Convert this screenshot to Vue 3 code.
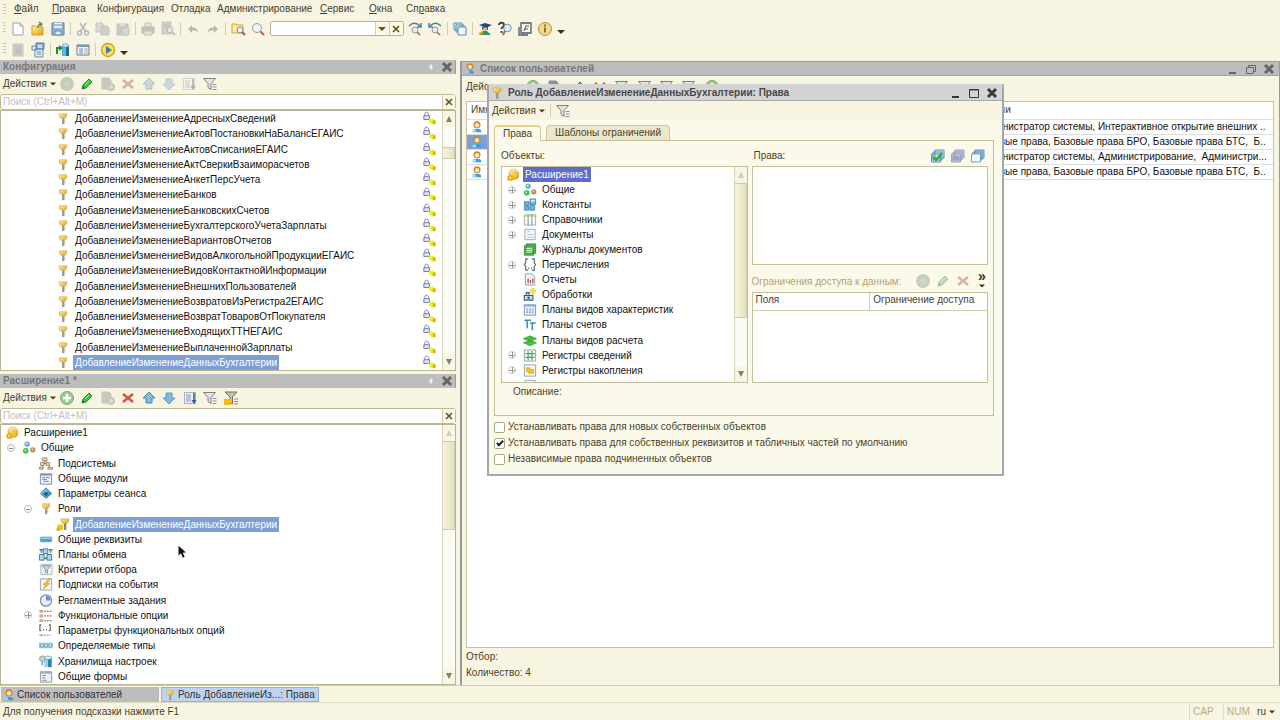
<script setup>
import { ref } from 'vue'

const menus = [
  ['', 'Ф', 'айл'], ['', 'П', 'равка'], ['Конфигурация', '', ''], ['Отладка', '', ''],
  ['Администрирование', '', ''], ['', 'С', 'ервис'], ['', 'О', 'кна'], ['Сп', 'р', 'авка'],
]

const mainTools = [
  { i: 'new', t: 'Новый' }, { i: 'open', t: 'Открыть' }, { i: 'save', t: 'Сохранить' }, { sep: true },
  { i: 'cut', t: 'Вырезать', off: true }, { i: 'copy', t: 'Копировать', off: true }, { i: 'paste', t: 'Вставить', off: true }, { sep: true },
  { i: 'print', t: 'Печать', off: true }, { i: 'preview', t: 'Просмотр', off: true }, { sep: true },
  { i: 'undo', t: 'Отменить', off: true }, { i: 'redo', t: 'Повторить', off: true }, { sep: true },
  { i: 'findall', t: 'Глобальный поиск' }, { i: 'find', t: 'Найти' },
]
const searchTools = [
  { i: 'findnext', t: 'Найти далее' }, { i: 'findprev', t: 'Найти назад' }, { sep: true },
  { i: 'windows', t: 'Окна' }, { sep: true },
  { i: 'syntax', t: 'Синтакс-помощник' }, { i: 'helpfind', t: 'Поиск в справке' }, { i: 'helpdoc', t: 'Содержание' }, { i: 'info', t: 'О программе' },
]
const configTools = [
  { i: 'doc', t: 'Конфигурация', off: true }, { i: 'config', t: 'Открыть конфигурацию' }, { sep: true },
  { i: 'dbupdate', t: 'Обновить базу' }, { i: 'form', t: 'Форма' }, { sep: true }, { i: 'play', t: 'Начать отладку' },
]

const actions = (on) => [
  { i: 'add', t: 'Добавить', off: !on }, { i: 'pencil', t: 'Изменить' }, { i: 'addcopy', t: 'Скопировать', off: true },
  { i: 'del', t: 'Удалить', off: !on }, { i: 'up', t: 'Вверх', off: !on }, { i: 'down', t: 'Вниз', off: !on },
  { i: 'sort', t: 'Упорядочить', off: !on }, { i: 'filter', t: 'Отбор' },
]
const confActions = actions(false)
const extActions = [...actions(true), { i: 'filterext', t: 'Отбор по расширению' }]

const roles = [
  'АдресныхСведений', 'АктовПостановкиНаБалансЕГАИС', 'АктовСписанияЕГАИС', 'АктСверкиВзаиморасчетов',
  'АнкетПерсУчета', 'Банков', 'БанковскихСчетов', 'БухгалтерскогоУчетаЗарплаты', 'ВариантовОтчетов',
  'ВидовАлкогольнойПродукцииЕГАИС', 'ВидовКонтактнойИнформации', 'ВнешнихПользователей',
  'ВозвратовИзРегистра2ЕГАИС', 'ВозвратТоваровОтПокупателя', 'ВходящихТТНЕГАИС', 'ВыплаченнойЗарплаты',
  'ДанныхБухгалтерии',
].map((n) => 'ДобавлениеИзменение' + n)

const extTree = [
  { l: 0, i: 'root', t: 'Расширение1' },
  { l: 1, i: 'common', t: 'Общие', e: 'minus' },
  { l: 2, i: 'subsys', t: 'Подсистемы' },
  { l: 2, i: 'module', t: 'Общие модули' },
  { l: 2, i: 'session', t: 'Параметры сеанса' },
  { l: 2, i: 'key', t: 'Роли', e: 'minus' },
  { l: 3, i: 'keyext', t: 'ДобавлениеИзменениеДанныхБухгалтерии', sel: true },
  { l: 2, i: 'attr', t: 'Общие реквизиты' },
  { l: 2, i: 'exchange', t: 'Планы обмена' },
  { l: 2, i: 'criteria', t: 'Критерии отбора' },
  { l: 2, i: 'event', t: 'Подписки на события' },
  { l: 2, i: 'clock', t: 'Регламентные задания' },
  { l: 2, i: 'options', t: 'Функциональные опции', e: 'plus' },
  { l: 2, i: 'optparam', t: 'Параметры функциональных опций' },
  { l: 2, i: 'types', t: 'Определяемые типы' },
  { l: 2, i: 'storage', t: 'Хранилища настроек' },
  { l: 2, i: 'commonform', t: 'Общие формы' },
]

const objectTree = [
  { l: 0, i: 'root', t: 'Расширение1', sel: true },
  { l: 1, i: 'common', t: 'Общие', e: 'plus' },
  { l: 1, i: 'const', t: 'Константы', e: 'plus' },
  { l: 1, i: 'catalog', t: 'Справочники', e: 'plus' },
  { l: 1, i: 'document', t: 'Документы', e: 'plus' },
  { l: 1, i: 'journal', t: 'Журналы документов' },
  { l: 1, i: 'enum', t: 'Перечисления', e: 'plus' },
  { l: 1, i: 'report', t: 'Отчеты' },
  { l: 1, i: 'process', t: 'Обработки' },
  { l: 1, i: 'chartypes', t: 'Планы видов характеристик' },
  { l: 1, i: 'accounts', t: 'Планы счетов' },
  { l: 1, i: 'calc', t: 'Планы видов расчета' },
  { l: 1, i: 'inforeg', t: 'Регистры сведений', e: 'plus' },
  { l: 1, i: 'accumreg', t: 'Регистры накопления', e: 'plus' },
  { l: 1, i: 'document', t: '' },
]

const users = [
  'Администратор системы, Интерактивное открытие внешних ..',
  'Базовые права, Базовые права БРО, Базовые права БТС,  Б..',
  'Администратор системы, Администрирование,  Администри...',
  'Базовые права, Базовые права БРО, Базовые права БТС,  Б..',
]
const userActions = ['add', 'addcopy', 'pencil', 'del', 'filter', 'filter', 'filter', 'filter', 'add']

const options = ref([
  { t: 'Устанавливать права для новых собственных объектов', v: false },
  { t: 'Устанавливать права для собственных реквизитов и табличных частей по умолчанию', v: true },
  { t: 'Независимые права подчиненных объектов', v: false },
])
const query = ref('')
const confQuery = ref('')
const extQuery = ref('')
const indent = (l) => ({ paddingLeft: (l ? 3 + 17 * (l - 1) : 3) + 'px' })
</script>

<template>
  <div class="app">
    <svg class="defs" aria-hidden="true">
      <defs>
        <linearGradient id="gGold" x2="1" y2="1"><stop stop-color="#fff2a0" /><stop offset="1" stop-color="#e0a010" /></linearGradient>
        <linearGradient id="gBlue" x2="1" y2="1"><stop stop-color="#a8e0f4" /><stop offset="1" stop-color="#2878b0" /></linearGradient>
      </defs>
      <symbol id="new" viewBox="0 0 16 16"><path d="M3 2h7l3 3v9H3z" fill="#fff" stroke="#8ba4c4" /><path d="M10 2v3h3" fill="#dce8f4" stroke="#8ba4c4" /></symbol>
      <symbol id="open" viewBox="0 0 16 16"><path d="M2 5h4l1 1h6v8H2z" fill="url(#gGold)" stroke="#cfa030" /><path d="M8 7c0-3 1-4 3-4M9 1l3 2-2 2" fill="none" stroke="#5a8a40" stroke-width="1.3" /></symbol>
      <symbol id="save" viewBox="0 0 16 16"><path d="M2 2h12v12H2z" fill="#8fb4d4" stroke="#5d7f9f" /><path d="M4 2h8v5H4z" fill="#e8f0f8" /><path d="M4 4h8M5 10h6v4H5z" fill="#dfe9f0" stroke="#6a8cab" /></symbol>
      <symbol id="cut" viewBox="0 0 16 16"><path d="M5 2l6 9M11 2l-6 9" stroke="#5f74a4" stroke-width="1.6" /><circle cx="4.500" cy="12" r="2" fill="none" stroke="#5f74a4" stroke-width="1.4" /><circle cx="11.500" cy="12" r="2" fill="none" stroke="#5f74a4" stroke-width="1.400" /></symbol>
      <symbol id="copy" viewBox="0 0 16 16"><path d="M1 2h6l2 2v7H1z" fill="#b0bcd2" stroke="#7d8fb0" /><path d="M6 5h6l2 2v7H6z" fill="#94a3c0" stroke="#7d8fb0" /></symbol>
      <symbol id="paste" viewBox="0 0 16 16"><path d="M2 3h11v11H2z" fill="#8c99b2" stroke="#7c8aa6" /><path d="M5 2h5v3H5z" fill="#c0c8d6" /><path d="M7 7h7v7H7z" fill="#aab5c8" stroke="#7c8aa6" /></symbol>
      <symbol id="print" viewBox="0 0 16 16"><path d="M5 2h6v5H5z" fill="#ccc" stroke="#888" /><path d="M2 6h12v6H2z" fill="#88888f" stroke="#77777f" /><path d="M4 10h8v4H4z" fill="#ccc" stroke="#888" /></symbol>
      <symbol id="preview" viewBox="0 0 16 16"><path d="M2 1h9v12H2z" fill="#9ea4b4" stroke="#858da0" /><path d="M4 4h5M4 6h5" stroke="#70788c" /><circle cx="10" cy="9" r="3" fill="#ccd" stroke="#70788c" /><path d="M12 11l3 3" stroke="#70788c" stroke-width="2" /></symbol>
      <symbol id="undo" viewBox="0 0 16 16"><path d="M3 8l4-4v2.500c4 0 6 2 6 5-2-2-3-2-6-2V12z" fill="#4f7a60" /></symbol>
      <symbol id="redo" viewBox="0 0 16 16"><path d="M13 8L9 4v2.500c-4 0-6 2-6 5 2-2 3-2 6-2V12z" fill="#4f7a60" /></symbol>
      <symbol id="findall" viewBox="0 0 16 16"><path d="M2 3h4l1 1h6v8H2z" fill="#fce99a" stroke="#cda640" /><circle cx="10" cy="9" r="3" fill="#f3f0f0" stroke="#888" /><path d="M12 11l3 3" stroke="#a05c54" stroke-width="2" /></symbol>
      <symbol id="find" viewBox="0 0 16 16"><circle cx="7" cy="7" r="4.500" fill="#edf2f7" stroke="#909aa8" /><path d="M10.500 10.500l3.500 3.500" stroke="#a0685c" stroke-width="2" /></symbol>
      <symbol id="findnext" viewBox="0 0 16 16"><path d="M2 5c4-4 8-3 11 0M14 2v4h-4" fill="none" stroke="#4c7ca0" stroke-width="1.500" /><circle cx="8" cy="9" r="3" fill="#f0e8e8" stroke="#999" /><path d="M10 11l3 3" stroke="#a0685c" stroke-width="1.600" /></symbol>
      <symbol id="findprev" viewBox="0 0 16 16"><path d="M14 5c-4-4-8-3-11 0M2 2v4h4" fill="none" stroke="#4c7ca0" stroke-width="1.500" /><circle cx="8" cy="9" r="3" fill="#f0e8e8" stroke="#999" /><path d="M10 11l3 3" stroke="#a0685c" stroke-width="1.600" /></symbol>
      <symbol id="windows" viewBox="0 0 16 16"><path d="M2 2h8v7H2zM4 4h8v7H4z" fill="#d8e8f2" stroke="#5c8cae" /><path d="M6 6h8v8H6z" fill="#eef6fb" stroke="#5c8cae" /></symbol>
      <symbol id="syntax" viewBox="0 0 16 16"><path d="M2 4l6-2 7 2-6 3z" fill="#264c7c" /><path d="M5 6h6v3H5z" fill="#3a6696" /><circle cx="8" cy="8.500" r="2" fill="#e8bb86" /><path d="M3 14l3-4h4l4 4z" fill="#3f8c68" /><path d="M2 13l4-2" stroke="#d6a03a" stroke-width="2" /></symbol>
      <symbol id="helpfind" viewBox="0 0 16 16"><path d="M2 4c0-3 5-3 5 0 0 2-2.500 2-2.500 4M4.500 10v2" fill="none" stroke="#33404c" stroke-width="1.800" /><circle cx="10.500" cy="7" r="3.800" fill="#dfe9f5" stroke="#7d8fa8" /><path d="M8 10l-2 4" stroke="#a0685c" stroke-width="2" /></symbol>
      <symbol id="helpdoc" viewBox="0 0 16 16"><path d="M4 2h10v10H4z" fill="#fbf8ea" stroke="#4d5a68" stroke-width="1.300" /><path d="M2 6v8h9" fill="none" stroke="#4d5a68" stroke-width="1.300" /><path d="M7 10l2-5h3M7 8h4" fill="none" stroke="#4d5a68" /></symbol>
      <symbol id="info" viewBox="0 0 16 16"><circle cx="8" cy="8" r="6.500" fill="#f4d88a" stroke="#b98f48" /><path d="M8 3.500v2M8 6.500v5" stroke="#695a3a" stroke-width="1.600" /></symbol>
      <symbol id="doc" viewBox="0 0 16 16"><path d="M3 2h10v12H3z" fill="#9a9fac" stroke="#8a8f9c" /><path d="M5 5h6M5 7h6M5 9h6M5 11h6" stroke="#636a7a" /></symbol>
      <symbol id="config" viewBox="0 0 16 16"><path d="M2 4h5v4H2zM5 7h8v8H5z" fill="#dbe9f5" stroke="#6a8dac" /><path d="M6 1h8v6H6z" fill="#8cb2d6" stroke="#51789f" /><path d="M8 3l4 3M12 3L8 6" stroke="#fff" /><path d="M7 10h4M7 12h4" stroke="#6a8dac" /></symbol>
      <symbol id="dbupdate" viewBox="0 0 16 16"><path d="M7 3v11h7V3z" fill="#58b8e0" /><path d="M11 3v11h3V3z" fill="#256a9c" /><ellipse cx="10.500" cy="3.500" rx="3.500" ry="1.600" fill="#c6ecf8" stroke="#3a86ae" stroke-width=".6" /><path d="M2 12V6h3" fill="none" stroke="#268a3c" stroke-width="2" /><path d="M4 3l4 3-4 3z" fill="#268a3c" /></symbol>
      <symbol id="form" viewBox="0 0 16 16"><path d="M2 3h12v10H2z" fill="#f4f7fa" stroke="#66788c" /><path d="M2 3h12v2H2z" fill="#7d98b6" /><path d="M4 7h4M4 9h4M4 11h4" stroke="#6f88a4" /><path d="M9 6h4v6H9z" fill="#c8d4e0" /></symbol>
      <symbol id="play" viewBox="0 0 16 16"><circle cx="8" cy="8" r="6.500" fill="#ffe04c" stroke="#d19c1c" stroke-width="1.300" /><path d="M6 4l6 4-6 4z" fill="#3a80b0" /></symbol>

      <symbol id="add" viewBox="0 0 16 16"><circle cx="8" cy="8" r="6.500" fill="#9ccc94" stroke="#76ad75" /><path d="M8 4v8M4 8h8" stroke="#fff" stroke-width="2.400" /></symbol>
      <symbol id="addoff" viewBox="0 0 16 16"><circle cx="8" cy="8" r="7" fill="#7ca07c" /><path d="M8 5v6M5 8h6" stroke="#94b494" stroke-width="2" /></symbol>
      <symbol id="pencil" viewBox="0 0 16 16"><path d="M3 13l1-4 6-6 3 3-6 6z" fill="#38c638" stroke="#249028" /><path d="M3 13l1-3 2 2z" fill="#456" /><path d="M6 9l4-4" stroke="#a7f39a" /></symbol>
      <symbol id="addcopy" viewBox="0 0 16 16"><path d="M2 2h7l2 2v9H2z" fill="#8c94a6" stroke="#848c9e" /><circle cx="11" cy="11" r="4" fill="#7ba07a" /><path d="M11 9v4M9 11h4" stroke="#b4ccb2" stroke-width="1.500" /></symbol>
      <symbol id="del" viewBox="0 0 16 16"><path d="M3 4l10 8M13 4L3 12" stroke="#d65444" stroke-width="2.600" /></symbol>
      <symbol id="up" viewBox="0 0 16 16"><path d="M8 2l6 6h-3v5H5V8H2z" fill="#7cbbe0" stroke="#4a86b0" /></symbol>
      <symbol id="down" viewBox="0 0 16 16"><path d="M8 14l6-6h-3V3H5v5H2z" fill="#7cbbe0" stroke="#5f9cc6" /></symbol>
      <symbol id="sort" viewBox="0 0 16 16"><path d="M2.500 2.500h11v11h-11z" fill="#eef2f8" stroke="#a4b0c6" /><path d="M4 5h5M4 7h5M4 9h5M4 11h5" stroke="#8896ae" /><path d="M12 3v8" stroke="#3a5884" stroke-width="1.500" /><path d="M9.500 10h5L12 14z" fill="#3a5884" /></symbol>
      <symbol id="filter" viewBox="0 0 16 16"><path d="M1.500 2.500h12L9 7.500v6l-3-2v-4z" fill="#e2e2de" stroke="#84847c" /><path d="M10.500 8.500h4M10.500 11h4M10.500 13.500h4" stroke="#8a94b0" stroke-width="1.200" /></symbol>
      <symbol id="filterext" viewBox="0 0 16 16"><path d="M2 2h12L9.500 7v7L7 12V7z" fill="#c8c4b0" stroke="#766e50" /><path d="M1 9h7v6H1z" fill="#f0bc18" /><path d="M11 9h4M11 11.500h4M11 14h4" stroke="#8a8a7a" /></symbol>

      <symbol id="key" viewBox="0 0 16 16"><path d="M4 3h8v2.500L10 8H6L4 5.500z" fill="url(#gGold)" stroke="#c9ab58" stroke-width=".7" /><path d="M7 8h2.500v6H7z" fill="#9b9b95" /><path d="M9 10h1.500v2H9z" fill="#c8c4b4" /></symbol>
      <symbol id="keyext" viewBox="0 0 16 16"><path d="M6 2h8v2.500L12 7H8L6 4.500z" fill="url(#gGold)" stroke="#b89844" stroke-width=".7" /><path d="M9 7h2.500v7H9z" fill="#8e867a" /><path d="M2 8h6v6H2z" fill="#f3c81a" /><circle cx="3" cy="13" r="2" fill="#e8b40c" /></symbol>
      <symbol id="lock" viewBox="0 0 16 16"><path d="M3.500 5V3.500c0-3 4-3 4 0V5" fill="none" stroke="#6a7aa0" /><path d="M2.500 5h6v4h-6z" fill="#e3e6f2" stroke="#6a7aa0" /><path d="M8 8h4l3 2v4h-4l-3-2z" fill="#f5ed1c" /><path d="M12 10h3v4h-3z" fill="#cdb91a" /></symbol>
      <symbol id="root" viewBox="0 0 16 16"><path d="M4 6c0-5 10-5 10 1v4c-2 3-9 3-10 0z" fill="url(#gGold)" stroke="#d29c14" stroke-width=".8" /><path d="M2 10l3-2 3 2v4l-3 1-3-1z" fill="#e9ac14" /><circle cx="5" cy="11.500" r="1" fill="#fff3b0" /><path d="M5 5c2-3 6-2 8 0" stroke="#fffad0" fill="none" /></symbol>
      <symbol id="common" viewBox="0 0 16 16"><circle cx="6" cy="4.500" r="2.800" fill="#6aa9d8" /><circle cx="4.500" cy="11.500" r="3" fill="#3fc24c" /><circle cx="12" cy="10.500" r="2.800" fill="#bd8468" /><circle cx="5.500" cy="4" r="1" fill="#d4ecfa" /><circle cx="4" cy="11" r="1" fill="#c6f6c8" /><circle cx="11.700" cy="10" r="1" fill="#f2d9cc" /></symbol>
      <symbol id="subsys" viewBox="0 0 16 16"><path d="M7 4L4 12M7 4l5 8M4 8h4" stroke="#8c7058" fill="none" /><path d="M4 2h5v3H4zM2 7h4v3H2zM8 7h4v3H8zM1 12h4v2H1zM10 12h5v2h-5z" fill="#f0dcc0" stroke="#8c7058" stroke-width=".8" /></symbol>
      <symbol id="module" viewBox="0 0 16 16"><path d="M2 3h12v11H2z" fill="#eef4fa" stroke="#6c8cac" /><path d="M2 3h12v2H2z" fill="#7fa2c6" /><path d="M4 7h3M8 7h4M4 9h5M5 11h6" stroke="#a0707c" /></symbol>
      <symbol id="session" viewBox="0 0 16 16"><path d="M8 2l6 6-6 5-6-5z" fill="url(#gBlue)" stroke="#3a7ca0" /><path d="M8 6l3 2-3 3-3-3z" fill="#1c5c88" /></symbol>
      <symbol id="attr" viewBox="0 0 16 16"><path d="M2 5.500h12v5H2z" fill="#459ccc" stroke="#6eb4d8" /><path d="M3 7h10" stroke="#a9def2" /></symbol>
      <symbol id="exchange" viewBox="0 0 16 16"><path d="M1 3h4M11 3h4M3 3v3M13 3v3" stroke="#4c9458" stroke-width="1.500" /><path d="M5 2h5v5H5zM1 8h5v6H1zM9 8h5v6H9z" fill="#a9dcf0" stroke="#39789c" /><path d="M6 12h3" stroke="#4c9458" stroke-width="2" /></symbol>
      <symbol id="criteria" viewBox="0 0 16 16"><path d="M2.500 2.500h12v11h-12z" fill="#eef0f2" stroke="#b0b6be" /><path d="M4 4h9L9.500 8v4l-2-1V8z" fill="#d4d7dc" stroke="#8c929c" /></symbol>
      <symbol id="event" viewBox="0 0 16 16"><path d="M2 2h12v12H2z" fill="#f2f4f6" stroke="#98a0a8" /><path d="M11 2l-6 6h3l-3 5 7-6H9l4-5z" fill="#f8c83c" stroke="#c9922a" stroke-width=".7" /></symbol>
      <symbol id="clock" viewBox="0 0 16 16"><circle cx="8" cy="8" r="6" fill="#e8eefa" stroke="#8090b8" stroke-width="1.400" /><path d="M8 8V3a5 5 0 0 1 5 5z" fill="#6690d4" /></symbol>
      <symbol id="options" viewBox="0 0 16 16"><path d="M1 2h4v3H1zM1 7h4v3H1zM1 12h4v3H1z" fill="#caa88a" /><path d="M6 3.500h9M6 8.500h9M6 13.500h9" stroke="#8a8078" stroke-dasharray="2 1" stroke-width="1.300" /></symbol>
      <symbol id="optparam" viewBox="0 0 16 16"><path d="M3 2H1.500v6H3M11 2h1.500v6H11M5 7h1M8 7h1" fill="none" stroke="#645c5c" stroke-width="1.200" /><path d="M1 12h4v2H1z" fill="#caa88a" /><path d="M6 13h7" stroke="#8a8078" stroke-dasharray="2 1" /></symbol>
      <symbol id="types" viewBox="0 0 16 16"><path d="M.5 5h15v6H.5z" fill="#9fd3e2" /><path d="M2 6.500h3v3H2zM6.500 6.500h3v3h-3zM11 6.500h3v3h-3z" fill="#e4f5f8" stroke="#5898ac" stroke-width=".8" /></symbol>
      <symbol id="storage" viewBox="0 0 16 16"><path d="M6 4v10h8V4z" fill="#9cd8f0" /><path d="M10 4v10h4V4z" fill="#2f80ac" /><ellipse cx="10" cy="4" rx="4" ry="1.800" fill="#d8f2fa" stroke="#5498b8" stroke-width=".7" /><circle cx="4" cy="5" r="3" fill="#c6ced2" stroke="#8f9ca4" /><path d="M4 8v4" stroke="#8f9ca4" stroke-width="1.600" /></symbol>
      <symbol id="commonform" viewBox="0 0 16 16"><path d="M2 3h12v11H2z" fill="#f0f3f5" stroke="#8494a4" /><path d="M2 3h12v2H2z" fill="#9db0c2" /><path d="M4 7h4M4 9.500h3M4 12h5" stroke="#7a8a9a" /></symbol>
      <symbol id="const" viewBox="0 0 16 16"><path d="M2 5h5v4H2zM2 10h5v4H2zM8 9h5v5H8zM8 2h6v6H8z" fill="#6db3dc" stroke="#3c7ca6" stroke-width=".8" /><path d="M9 3h4v2H9z" fill="#d2eefa" /></symbol>
      <symbol id="catalog" viewBox="0 0 16 16"><path d="M2 3h12v11H2z" fill="#fbfdf2" stroke="#a0aa8a" /><path d="M2 3h12v2H2z" fill="#b4d8a0" /><path d="M6 3v11M10 3v11" stroke="#8a9cb8" stroke-width="1.200" /></symbol>
      <symbol id="document" viewBox="0 0 16 16"><path d="M2.500 2.500h11v11h-11z" fill="#f4f8fd" stroke="#93aac6" /><path d="M5 5h3M5 8h7M5 11h7" stroke="#afc0d6" /></symbol>
      <symbol id="journal" viewBox="0 0 16 16"><path d="M4 2h10v10H4zM2 4h10v10H2z" fill="#5cc45c" stroke="#318c3a" /><path d="M4 7h6M4 9h6M4 11h6" stroke="#dbf6d4" /></symbol>
      <symbol id="enum" viewBox="0 0 16 16"><path d="M6 2H3.500v4L2 8l1.500 2v4H6M10 2h2.500v4L14 8l-1.500 2v4H10" fill="none" stroke="#5a6470" stroke-width="1.200" /><path d="M6 12h1M9 12h1" stroke="#5a6470" stroke-width="1.500" /></symbol>
      <symbol id="report" viewBox="0 0 16 16"><path d="M3 2h7l3 3v9H3z" fill="#f5f5f5" stroke="#99a" /><path d="M6 12V7M8.500 12V8.500M11 12V7" stroke="#a8585c" stroke-width="1.400" /></symbol>
      <symbol id="process" viewBox="0 0 16 16"><path d="M2 9h9v5H2zM4 9V6h3v3" fill="#d4e4f2" stroke="#3c5c7c" stroke-width="1.200" /><circle cx="6.500" cy="11.500" r="1.400" fill="#3c5c7c" /><path d="M11 1l3.500 3.500L11 8 7.500 4.500z" fill="#f7ea2c" stroke="#cdb82a" stroke-width=".6" /></symbol>
      <symbol id="chartypes" viewBox="0 0 16 16"><path d="M2 3h12v11H2z" fill="#f0f6fc" stroke="#7490b0" /><path d="M2 3h12v2H2z" fill="#8cb0d4" /><path d="M5 7v5M8 7v5M11 7v5" stroke="#7490b0" stroke-dasharray="1 1" stroke-width="2" /></symbol>
      <symbol id="accounts" viewBox="0 0 16 16"><path d="M2 3.500h7M5 3.500V12M8 6.500h6M10.500 6.500V14" fill="none" stroke="#4288aa" stroke-width="1.600" /></symbol>
      <symbol id="calc" viewBox="0 0 16 16"><path d="M1 10.500l7-3 7 3-7 3zM1 6l7-3 7 3-7 3z" fill="#48c23c" stroke="#2c9430" stroke-width=".7" /></symbol>
      <symbol id="inforeg" viewBox="0 0 16 16"><path d="M2 2h12v12H2z" fill="#f2faf4" stroke="#8aa896" /><path d="M6 3v10M10 3v10M3 6h10M3 10h10" stroke="#4ea468" stroke-width="1.200" /></symbol>
      <symbol id="accumreg" viewBox="0 0 16 16"><path d="M2 2h12v12H2z" fill="#fdfbea" stroke="#8aa0b8" /><path d="M4 5h4v2h4v4H6V9H4z" fill="#ecc622" stroke="#c9a018" stroke-width=".6" /></symbol>
      <symbol id="user" viewBox="0 0 16 16"><circle cx="8" cy="5.500" r="4" fill="#c8862c" /><circle cx="8" cy="6" r="2.500" fill="#fbe1b4" /><path d="M3 14c0-3 2-4 5-4s5 1 5 4z" fill="#3d9cd4" /><path d="M3 11h4v3H3z" fill="#9cd8f4" /></symbol>
      <symbol id="checkall" viewBox="0 0 16 16"><path d="M5 2h9v8H5zM3 4h9v8H3zM1.500 6h9v8h-9z" fill="#cfe4f2" stroke="#5c90b8" /><path d="M3 9l3 3 6-7" fill="none" stroke="#2ab42a" stroke-width="2.400" /></symbol>
      <symbol id="checkgray" viewBox="0 0 16 16"><path d="M5 2h9v8H5zM3 4h9v8H3zM1.500 6h9v8h-9z" fill="#bcc2d6" stroke="#9ba3bf" /><path d="M3 9h6M3 11h6" stroke="#8c95b4" /></symbol>
      <symbol id="checknone" viewBox="0 0 16 16"><path d="M5 2h9v8H5zM3 4h9v8H3z" fill="#a9c6de" stroke="#5c90b8" /><path d="M1.500 6h9v8h-9z" fill="#eefaff" stroke="#6fa4c6" /></symbol>
      <symbol id="plus" viewBox="0 0 16 16"><circle cx="8" cy="8" r="3.500" fill="#fff" stroke="#c4c4c4" /><path d="M5 8.500h6M8.500 5v6" stroke="#999" /></symbol>
      <symbol id="minus" viewBox="0 0 16 16"><circle cx="8" cy="8" r="3.500" fill="#fff" stroke="#b8b8b8" /><path d="M6 8.500h4" stroke="#888" /></symbol>
      <symbol id="close" viewBox="0 0 16 16"><path d="M4 4l8 8M12 4l-8 8" stroke="currentColor" stroke-width="3" /></symbol>
      <symbol id="clear" viewBox="0 0 16 16"><path d="M5 5l6 6M11 5l-6 6" stroke="currentColor" stroke-width="1.600" /></symbol>
      <symbol id="pin" viewBox="0 0 16 16"><path d="M7 6h2v4H7z" fill="#f2f2f2" stroke="#e8e8e8" /></symbol>
      <symbol id="min" viewBox="0 0 16 16"><path d="M4 12h7" stroke="currentColor" stroke-width="2" /></symbol>
      <symbol id="max" viewBox="0 0 16 16"><path d="M3.500 4.500h9v8h-9zM3 5h10" fill="none" stroke="currentColor" /></symbol>
      <symbol id="restore" viewBox="0 0 16 16"><path d="M5.500 6V4.500h7v6H11M3.500 6.500h7v6h-7z" fill="none" stroke="currentColor" /></symbol>
      <symbol id="caret" viewBox="0 0 16 16"><path d="M4 6h8l-4 4z" fill="currentColor" /></symbol>
      <symbol id="triup" viewBox="0 0 16 16"><path d="M5 11h6L8 5z" fill="currentColor" /></symbol>
      <symbol id="tridown" viewBox="0 0 16 16"><path d="M5 5h6L8 11z" fill="currentColor" /></symbol>
    </svg>

    <nav class="menubar grip">
      <button v-for="(m, k) in menus" :key="k" type="button">{{ m[0] }}<u v-if="m[1]">{{ m[1] }}</u>{{ m[2] }}</button>
    </nav>

    <div class="toolbar grip">
      <template v-for="(b, k) in mainTools" :key="k">
        <span v-if="b.sep" class="sep"></span>
        <button v-else type="button" class="tool" :aria-label="b.t" :disabled="b.off"><svg><use :href="'#' + b.i" /></svg></button>
      </template>
      <div class="combo">
        <input v-model="query" type="text" aria-label="Строка поиска" />
        <button type="button" aria-label="История поиска"><svg><use href="#caret" /></svg></button>
        <button type="button" aria-label="Очистить"><svg><use href="#clear" /></svg></button>
      </div>
      <template v-for="(b, k) in searchTools" :key="'s' + k">
        <span v-if="b.sep" class="sep"></span>
        <button v-else type="button" class="tool" :aria-label="b.t"><svg><use :href="'#' + b.i" /></svg></button>
      </template>
      <button type="button" class="more" aria-label="Ещё"><svg><use href="#caret" /></svg></button>
    </div>

    <div class="toolbar grip">
      <template v-for="(b, k) in configTools" :key="k">
        <span v-if="b.sep" class="sep"></span>
        <button v-else type="button" class="tool" :aria-label="b.t" :disabled="b.off"><svg><use :href="'#' + b.i" /></svg></button>
      </template>
      <button type="button" class="more" aria-label="Ещё"><svg><use href="#caret" /></svg></button>
    </div>

    <main class="workspace">
      <div class="side">
        <section class="panel">
          <header class="caption">
            <h2>Конфигурация</h2>
            <button type="button" aria-label="Закрепить"><svg><use href="#pin" /></svg></button>
            <button type="button" aria-label="Закрыть"><svg><use href="#close" /></svg></button>
          </header>
          <div class="actions">
            <button type="button" class="drop">Действия<svg><use href="#caret" /></svg></button>
            <div class="icons eight">
              <button v-for="a in confActions" :key="a.i" type="button" class="tool" :aria-label="a.t" :disabled="a.off"><svg><use :href="a.i === 'add' ? '#addoff' : '#' + a.i" /></svg></button>
            </div>
          </div>
          <div class="search">
            <input v-model="confQuery" type="text" placeholder="Поиск (Ctrl+Alt+M)" aria-label="Поиск в конфигурации" />
            <button type="button" aria-label="Очистить"><svg><use href="#clear" /></svg></button>
          </div>
          <div class="listbox">
            <ul class="tree">
              <li v-for="(r, k) in roles" :key="r" :style="indent(3)">
                <span class="exp"></span>
                <svg><use href="#key" /></svg>
                <span class="label" :class="{ sel: k === 16 }">{{ r }}</span>
                <svg class="lock"><use href="#lock" /></svg>
              </li>
            </ul>
            <div class="scroll">
              <button type="button" aria-label="Вверх"><svg><use href="#triup" /></svg></button>
              <div class="track conf"><span class="thumb"></span></div>
              <button type="button" aria-label="Вниз"><svg><use href="#tridown" /></svg></button>
            </div>
          </div>
        </section>

        <section class="panel">
          <header class="caption">
            <h2>Расширение1 *</h2>
            <button type="button" aria-label="Закрепить"><svg><use href="#pin" /></svg></button>
            <button type="button" aria-label="Закрыть"><svg><use href="#close" /></svg></button>
          </header>
          <div class="actions">
            <button type="button" class="drop">Действия<svg><use href="#caret" /></svg></button>
            <div class="icons nine">
              <button v-for="a in extActions" :key="a.i" type="button" class="tool" :aria-label="a.t" :disabled="a.off"><svg><use :href="'#' + a.i" /></svg></button>
            </div>
          </div>
          <div class="search">
            <input v-model="extQuery" type="text" placeholder="Поиск (Ctrl+Alt+M)" aria-label="Поиск в расширении" />
            <button type="button" aria-label="Очистить"><svg><use href="#clear" /></svg></button>
          </div>
          <div class="listbox">
            <ul class="tree">
              <li v-for="n in extTree" :key="n.t" :style="indent(n.l)">
                <span v-if="n.l" class="exp"><svg v-if="n.e"><use :href="'#' + n.e" /></svg></span>
                <svg><use :href="'#' + n.i" /></svg>
                <span class="label" :class="{ sel: n.sel }">{{ n.t }}</span>
              </li>
            </ul>
            <div class="scroll">
              <button type="button" class="dim" aria-label="Вверх"><svg><use href="#triup" /></svg></button>
              <div class="track ext"><span class="thumb"></span></div>
              <button type="button" aria-label="Вниз"><svg><use href="#tridown" /></svg></button>
            </div>
          </div>
        </section>
      </div>

      <div class="mdi">
        <section class="window">
          <header class="caption">
            <svg><use href="#user" /></svg>
            <h2>Список пользователей</h2>
            <button type="button" aria-label="Свернуть"><svg><use href="#min" /></svg></button>
            <button type="button" aria-label="Восстановить"><svg><use href="#restore" /></svg></button>
            <button type="button" aria-label="Закрыть"><svg><use href="#close" /></svg></button>
          </header>
          <div class="actions">
            <button type="button" class="drop">Действия<svg><use href="#caret" /></svg></button>
            <div class="icons users">
              <svg v-for="(a, k) in userActions" :key="k"><use :href="'#' + a" /></svg>
            </div>
          </div>
          <div class="users-box">
            <table class="users-table">
              <thead><tr><th>Имя</th><th>Роли</th></tr></thead>
              <tbody>
                <tr v-for="(u, k) in users" :key="k" :class="{ current: k === 1 }">
                  <td><svg><use href="#user" /></svg></td>
                  <td>{{ u }}</td>
                </tr>
              </tbody>
            </table>
          </div>
          <footer class="summary"><span>Отбор:</span><span>Количество: 4</span></footer>
        </section>

        <section class="dialog" role="dialog" aria-labelledby="dlg-title">
          <header class="caption">
            <svg><use href="#key" /></svg>
            <h2 id="dlg-title">Роль ДобавлениеИзменениеДанныхБухгалтерии: Права</h2>
            <button type="button" aria-label="Свернуть"><svg><use href="#min" /></svg></button>
            <button type="button" aria-label="Развернуть"><svg><use href="#max" /></svg></button>
            <button type="button" aria-label="Закрыть"><svg><use href="#close" /></svg></button>
          </header>
          <div class="actions">
            <button type="button" class="drop">Действия<svg><use href="#caret" /></svg></button>
            <span class="sep"></span>
            <button type="button" class="tool" aria-label="Отбор"><svg><use href="#filter" /></svg></button>
          </div>
          <div class="body">
            <div class="tabs" role="tablist">
              <button type="button" role="tab" aria-selected="true" class="active">Права</button>
              <button type="button" role="tab" aria-selected="false">Шаблоны ограничений</button>
            </div>
            <div class="sheet">
              <div class="col">
                <div class="head">Объекты:</div>
                <div class="listbox">
                  <ul class="tree">
                    <li v-for="(n, k) in objectTree" :key="k" :style="indent(n.l)">
                      <span v-if="n.l" class="exp"><svg v-if="n.e"><use :href="'#' + n.e" /></svg></span>
                      <svg><use :href="'#' + n.i" /></svg>
                      <span class="label" :class="{ sel: n.sel }">{{ n.t }}</span>
                    </li>
                  </ul>
                  <div class="scroll">
                    <button type="button" class="dim" aria-label="Вверх"><svg><use href="#triup" /></svg></button>
                    <div class="track obj"><span class="thumb"></span></div>
                    <button type="button" aria-label="Вниз"><svg><use href="#tridown" /></svg></button>
                  </div>
                </div>
              </div>
              <div class="col">
                <div class="head">
                  <span>Права:</span>
                  <button type="button" class="tool" aria-label="Установить все"><svg><use href="#checkall" /></svg></button>
                  <button type="button" class="tool" aria-label="Не определено"><svg><use href="#checkgray" /></svg></button>
                  <button type="button" class="tool" aria-label="Снять все"><svg><use href="#checknone" /></svg></button>
                </div>
                <div class="rights"></div>
                <div class="head limits">
                  <span>Ограничения доступа к данным:</span>
                  <button type="button" class="tool" disabled aria-label="Добавить"><svg><use href="#addoff" /></svg></button>
                  <button type="button" class="tool" disabled aria-label="Изменить"><svg><use href="#pencil" /></svg></button>
                  <button type="button" class="tool" disabled aria-label="Удалить"><svg><use href="#del" /></svg></button>
                  <button type="button" class="chev" aria-label="Ещё">»<svg><use href="#caret" /></svg></button>
                </div>
                <div class="limits-box">
                  <table><thead><tr><th>Поля</th><th>Ограничение доступа</th></tr></thead></table>
                </div>
              </div>
              <div class="descr">Описание:</div>
            </div>
            <div class="checks">
              <label v-for="o in options" :key="o.t"><input v-model="o.v" type="checkbox" />{{ o.t }}</label>
            </div>
          </div>
        </section>
      </div>
    </main>

    <div class="taskbar">
      <button type="button"><svg><use href="#user" /></svg>Список пользователей</button>
      <button type="button" class="active"><svg><use href="#key" /></svg>Роль ДобавлениеИз...: Права</button>
    </div>
    <footer class="status">
      <span class="hint">Для получения подсказки нажмите F1</span>
      <span class="ind">CAP</span>
      <span class="ind">NUM</span>
      <button type="button" class="drop">ru<svg><use href="#caret" /></svg></button>
    </footer>

    <svg class="cursor" viewBox="0 0 12 18" aria-hidden="true"><path d="M1 1v13l3-3 2 5 3-1-2-5h4z" fill="#111" stroke="#fff" /></svg>
  </div>
</template>

<style>
body { background: #f8f4e2; }
</style>

<style scoped>
.app {
  position: relative;
  display: flex;
  flex-direction: column;
  min-height: 100vh;
  box-sizing: border-box;
  background: #f8f4e2;
  color: #4a4128;
  font: 10px/14px "Liberation Sans", Arial, sans-serif;
}
.app *, .app *::before { box-sizing: border-box; }
.defs { position: absolute; width: 0; height: 0; }
svg { display: block; flex: none; width: 16px; height: 16px; }
button, input { font: inherit; color: inherit; margin: 0; padding: 0; border: 0; background: none; }
input { min-width: 0; outline: 0; }
h2 { margin: 0; font-size: 10px; font-weight: bold; flex: 1; white-space: nowrap; }
ul { margin: 0; padding: 0; list-style: none; }

.grip { position: relative; padding-left: 8px; }
.grip::before {
  content: "";
  position: absolute;
  left: 3px;
  top: 4px;
  width: 3px;
  height: 12px;
  background: repeating-linear-gradient(#cfcaaf 0 1px, transparent 1px 3px);
}
.menubar {
  display: grid;
  grid-template-columns: 38px 45px 74px 46px 103px 49px 37px 60px;
  height: 18px;
  padding-left: 14px;
}
.menubar button { text-align: left; white-space: nowrap; }
.toolbar { display: flex; align-items: center; height: 21px; }
.tool { flex: none; padding: 0 2px; }
.tool:disabled svg { filter: grayscale(0.5); opacity: 0.45; }
.sep { flex: none; width: 1px; height: 13px; margin: 0 2px; background: #d3cdb3; }
.more { padding-top: 7px; width: 12px; overflow: hidden; color: #3c3214; }
.more svg { margin-left: -2px; }
.combo {
  display: flex;
  width: 134px;
  height: 15px;
  margin-left: 2px;
  margin-right: 1px;
  border: 1px solid #b8b294;
  border-radius: 2px;
  background: #fff;
}
.combo input { flex: 1; }
.combo button { width: 14px; overflow: hidden; border-left: 1px solid #d4cfb2; background: #fbf9e6; color: #5f5318; }
.combo button svg { margin: -1px 0 0 -2px; }

.workspace { display: grid; grid-template-columns: 456fr 820fr; column-gap: 4px; flex: 1; }
.side { display: grid; grid-template-rows: 1fr 1fr; row-gap: 3px; min-width: 0; }
.panel { display: flex; flex-direction: column; min-width: 0; }
.caption { display: flex; align-items: center; height: 14px; padding-left: 3px; background: #bdbdbd; color: #777; }
.caption button { color: #666; }
.side .caption { border-right: 1px solid #999; }
.actions { display: flex; align-items: center; height: 20px; padding-left: 3px; }
.drop { display: flex; align-items: center; white-space: nowrap; }
.drop svg { width: 12px; height: 12px; margin-right: -1px; color: #453a18; }
.icons { display: flex; justify-content: space-between; }
.icons .tool { padding: 0; }
.eight { width: 159px; margin-left: 1px; }
.nine { width: 180px; margin-left: 1px; }
.search { display: flex; height: 16px; border: 1px solid #beb896; border-radius: 3px; background: #fff; }
.search input { flex: 1; padding-left: 2px; }
.search input::placeholder { color: #c4c0bc; opacity: 1; }
.search button { width: 13px; overflow: hidden; border-left: 1px solid #d4cfb2; background: #fbf9e6; color: #5f5318; }
.search button svg { margin: -1px 0 0 -2px; }
.listbox { display: flex; flex: 1; min-height: 0; border: 1px solid #bbb58f; background: #fff; color: #111; }
.tree { display: flex; flex-direction: column; flex: 1; min-width: 0; overflow: hidden; }
.tree li { display: flex; align-items: center; flex: 1 0 0; min-height: 15px; max-height: 20px; }
.tree li > svg { height: 15px; }
.exp { flex: none; width: 17px; margin-left: -1px; margin-right: 1px; }
.label { margin-left: 2px; padding: 0 2px; line-height: 15px; white-space: nowrap; }
.label.sel { background: #7e9fd6; color: #fff; }
.lock { margin-left: auto; margin-right: 5px; }
.scroll { display: flex; flex-direction: column; flex: none; width: 13px; border-left: 1px solid #d8d4b8; }
.scroll button { height: 16px; overflow: hidden; background: #f7f5e4; color: #848068; }
.scroll button svg { margin-left: -2px; }
.scroll .dim { color: #cfccba; }
.track { display: grid; flex: 1; background: #fbfbf6; }
.thumb { background: linear-gradient(90deg, #f6f3da, #e6e2be); border: 1px solid #cfcaa8; border-left: 0; }
.conf { grid-template-rows: 9fr 5fr 86fr; }
.conf .thumb { grid-row: 2; }
.ext { grid-template-rows: 39fr 61fr; }
.obj { grid-template-rows: 74fr 26fr; }

.mdi { position: relative; display: flex; min-width: 0; padding-top: 1px; }
.window { display: flex; flex-direction: column; flex: 1; min-width: 0; border: 1px solid #9a9a9a; border-width: 1px 1px 0 2px; padding: 0 5px 0 4px; }
.window > .caption { height: 14px; margin: 0 -5px 0 -4px; padding: 0 2px 0 0; border-bottom: 1px solid #a4a4a4; }
.window > .caption > svg { height: 13px; }
.window > .caption h2 { margin-left: 2px; }
.window > .caption button { margin-left: 2px; }
.window > .actions { height: 25px; padding: 0 0 4px; }
.users { width: 195px; margin-left: 4px; }
.users-box { flex: 1; border: 1px solid #c8c3a4; background: #fff; }
.users-table { width: 100%; border-collapse: collapse; table-layout: fixed; }
.users-table th, .users-table td { height: 15px; padding: 0; text-align: left; font-weight: normal; line-height: 14px; border-bottom: 1px solid #dedede; white-space: pre; }
.users-table th { height: 17px; padding-left: 4px; }
.users-table th:first-child { width: 63%; }
.users-table th + th { padding-left: 13px; }
.users-table td { color: #111; padding-left: 3px; }
.users-table td:first-child { padding-left: 2px; }
.users-table td svg { height: 14px; }
.users-table .current td:first-child { background: #7e9fd6; }
.summary { display: flex; flex-direction: column; gap: 2px; padding: 2px 0 5px; }

.dialog {
  position: absolute;
  left: 27px;
  top: 24px;
  width: 517px;
  display: flex;
  flex-direction: column;
  border: 2px solid #a3a6ab;
  border-top: 1px solid #d4d4d4;
  background: #fbfaea;
}
.dialog > .caption { height: 16px; padding: 0 2px 0 0; background: #d4d4d4; color: #484848; border-bottom: 1px solid #a8a8a8; }
.dialog > .caption h2 { margin-left: 3px; }
.dialog > .caption button { margin-left: 2px; color: #383838; }
.dialog > .actions { height: 19px; background: #f8f4e2; }
.dialog > .actions .sep { margin: 0 2px 0 3px; }
.body { padding: 5px 8px 8px 5px; }
.tabs { display: flex; gap: 5px; }
.tabs button { height: 15px; padding: 0 8px; border: 1px solid #cdc7a0; border-bottom: 0; border-radius: 4px 4px 0 0; background: #ece8cc; }
.tabs .active { position: relative; height: 16px; margin-bottom: -1px; border-top: 2px solid #e6cf80; background: #fbfaea; }
.sheet { display: grid; grid-template-columns: 246fr 236fr; column-gap: 4px; padding: 5px 5px 0 6px; border: 1px solid #c5bf9c; }
.col { display: flex; flex-direction: column; height: 237px; min-width: 0; }
.head { display: flex; align-items: center; flex: none; height: 20px; padding-bottom: 1px; }
.head span { flex: 1; padding-left: 2px; white-space: nowrap; }
.dialog .listbox { border-color: #c5bf9c; }
.dialog .tree li { flex: 0 0 7%; }
.dialog .label.sel { background: #5f6cc8; }
.rights { height: 99px; border: 1px solid #c5bf9c; background: #fff; }
.limits { height: 27px; padding-top: 5px; color: #b3a36c; }
.limits span { padding: 3px 0 0; }
.chev { width: 12px; height: 18px; margin-left: 3px; color: #3c3214; font-size: 14px; font-weight: bold; line-height: 8px; }
.chev svg { width: 12px; height: 12px; }
.limits-box { flex: 1; border: 1px solid #c5bf9c; background: #fff; }
.limits-box table { width: 100%; border-collapse: collapse; }
.limits-box th { width: 50%; height: 17px; padding: 0 3px 2px; font-weight: normal; text-align: left; border-bottom: 1px solid #d2cdb0; }
.limits-box th + th { border-left: 1px solid #d2cdb0; }
.descr { height: 32px; padding: 2px 12px; }
.checks { display: flex; flex-direction: column; gap: 2px; padding-top: 4px; }
.checks label { display: flex; align-items: center; gap: 3px; }
.checks input { appearance: none; width: 11px; height: 11px; border: 1px solid #aaa68c; border-radius: 2px; background: #fff; }
.checks input:checked::before { content: ""; display: block; width: 4px; height: 7px; margin: 0 0 0 3px; border: solid #222; border-width: 0 2px 2px 0; transform: rotate(45deg); }

.taskbar { display: flex; gap: 2px; height: 17px; padding: 1px 1px 0; border-top: 1px solid #d2cda8; }
.taskbar button { display: flex; align-items: center; width: 158px; height: 15px; background: #bdbdbd; color: #333; white-space: nowrap; }
.taskbar svg { height: 14px; }
.taskbar .active { border: 1px solid #9cb2d4; background: #bfd2ef; }
.status { display: flex; align-items: center; height: 18px; padding: 0 3px; border-top: 1px solid #e0dbbd; }
.hint { flex: 1; }
.ind { width: 34px; padding-left: 3px; border-left: 1px solid #e0dbbd; color: #b5ae85; }
.cursor { position: absolute; left: 177px; top: 544px; width: 11px; height: 16px; }
</style>
